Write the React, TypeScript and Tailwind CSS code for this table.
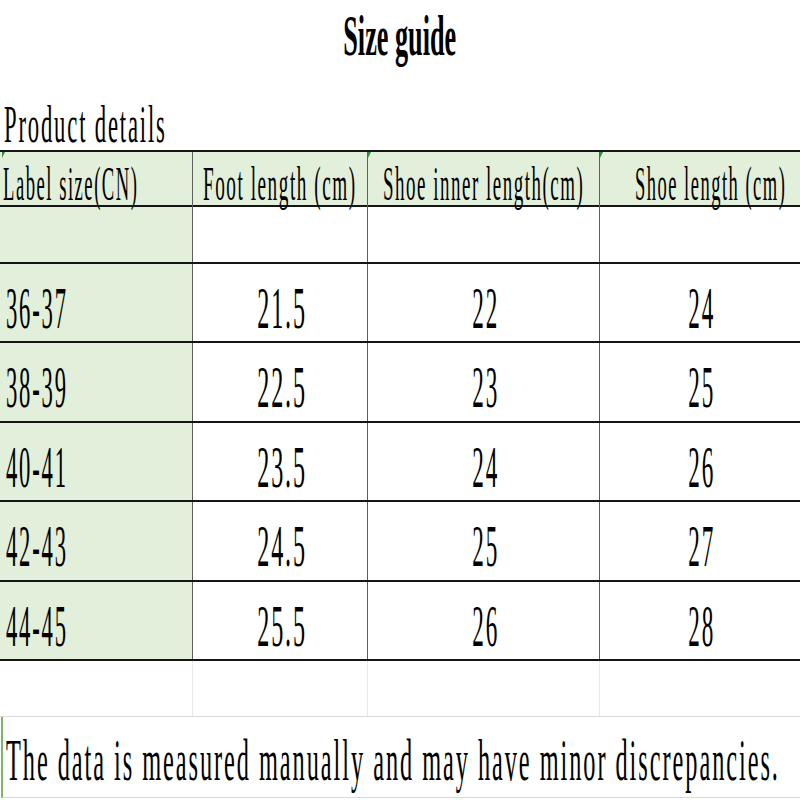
import React from "react";

const rows = [
  ["36-37", "21.5", "22", "24"],
  ["38-39", "22.5", "23", "25"],
  ["40-41", "23.5", "24", "26"],
  ["42-43", "24.5", "25", "27"],
  ["44-45", "25.5", "26", "28"],
];
const heights = ["h-[79px]", "h-[80px]", "h-[79px]", "h-[80px]", "h-[79px]"];

const cols = "grid grid-cols-[193px_175px_232px_200px]";
const txt = "inline-block whitespace-nowrap leading-none text-black";
const spaced = "tracking-[0.08em]";
const vline = "border-r border-[#5e5e5e]";
const green = "bg-[#e2efda]";

function Tri({ className }: { className: string }) {
  return (
    <span
      className={`absolute top-0 w-0 h-0 border-t-[6px] border-t-[#2f8f3f] border-r-[3px] border-r-transparent ${className}`}
    />
  );
}

export default function App() {
  return (
    <div className="w-[800px] h-[800px] bg-white overflow-hidden font-['Liberation_Serif',serif] text-black">
      <div className="h-[150px] flex flex-col">
        <div className="pt-[7px] flex justify-center">
          <span className={`${txt} font-bold text-[57px] origin-center scale-x-[0.46]`}>Size guide</span>
        </div>
        <div className="mt-[34px] pl-[4px] flex">
          <span className={`${txt} ${spaced} text-[53px] origin-left scale-x-[0.428]`}>Product details</span>
        </div>
      </div>

      <div className="border-t-2 border-[#151515]">
        {/* header */}
        <div className={`${cols} h-[55px] border-b-2 border-[#151515] ${green}`}>
          <div className={`relative flex items-start pt-[8px] pl-[3px] ${vline}`}>
            <Tri className="left-[2px]" />
            <span className={`${txt} ${spaced} text-[48px] origin-left scale-x-[0.389]`}>Label size(CN)</span>
          </div>
          <div className={`relative flex items-start pt-[8px] pl-[10px] ${vline}`}>
            <span className={`${txt} ${spaced} text-[48px] origin-left scale-x-[0.40]`}>Foot length (cm)</span>
          </div>
          <div className={`relative flex items-start pt-[8px] pl-[15px] ${vline}`}>
            <Tri className="left-0" />
            <span className={`${txt} ${spaced} text-[48px] origin-left scale-x-[0.395]`}>Shoe inner length(cm)</span>
          </div>
          <div className="relative flex items-start pt-[8px] pl-[35px]">
            <Tri className="left-0" />
            <span className={`${txt} ${spaced} text-[48px] origin-left scale-x-[0.386]`}>Shoe length (cm)</span>
          </div>
        </div>

        {/* empty row */}
        <div className={`${cols} h-[57px] border-b-2 border-[#151515]`}>
          <div className={`${green} ${vline}`} />
          <div className={vline} />
          <div className={vline} />
          <div />
        </div>

        {rows.map((r, i) => (
          <div key={r[0]} className={`${cols} ${heights[i]} border-b-2 border-[#151515]`}>
            <div className={`flex items-start pt-[14px] pl-[6px] ${green} ${vline}`}>
              <span className={`${txt} ${spaced} text-[60px] origin-left scale-x-[0.377]`}>{r[0]}</span>
            </div>
            <div className={`flex items-start justify-center pt-[14px] pl-[4px] ${vline}`}>
              <span className={`${txt} ${spaced} text-[60px] origin-center scale-x-[0.402]`}>{r[1]}</span>
            </div>
            <div className={`flex items-start justify-center pt-[14px] pl-[4px] ${vline}`}>
              <span className={`${txt} ${spaced} text-[60px] origin-center scale-x-[0.386]`}>{r[2]}</span>
            </div>
            <div className="flex items-start justify-center pt-[14px] pl-[4px]">
              <span className={`${txt} ${spaced} text-[60px] origin-center scale-x-[0.386]`}>{r[3]}</span>
            </div>
          </div>
        ))}

        {/* blank spreadsheet row */}
        <div className={`${cols} h-[56px] border-b border-[#d9d9d9]`}>
          <div className="border-r border-[#e8e8e8]" />
          <div className="border-r border-[#e8e8e8]" />
          <div className="border-r border-[#e8e8e8]" />
          <div />
        </div>

        {/* note */}
        <div className="ml-[1px] h-[81px] border-b border-[#d9d9d9] border-l-2 border-l-[#7ab865] flex items-start pt-[13px] pl-[3px]">
          <span className={`${txt} ${spaced} text-[60px] origin-left scale-x-[0.4055]`}>
            The data is measured manually and may have minor discrepancies.
          </span>
        </div>
      </div>
    </div>
  );
}
